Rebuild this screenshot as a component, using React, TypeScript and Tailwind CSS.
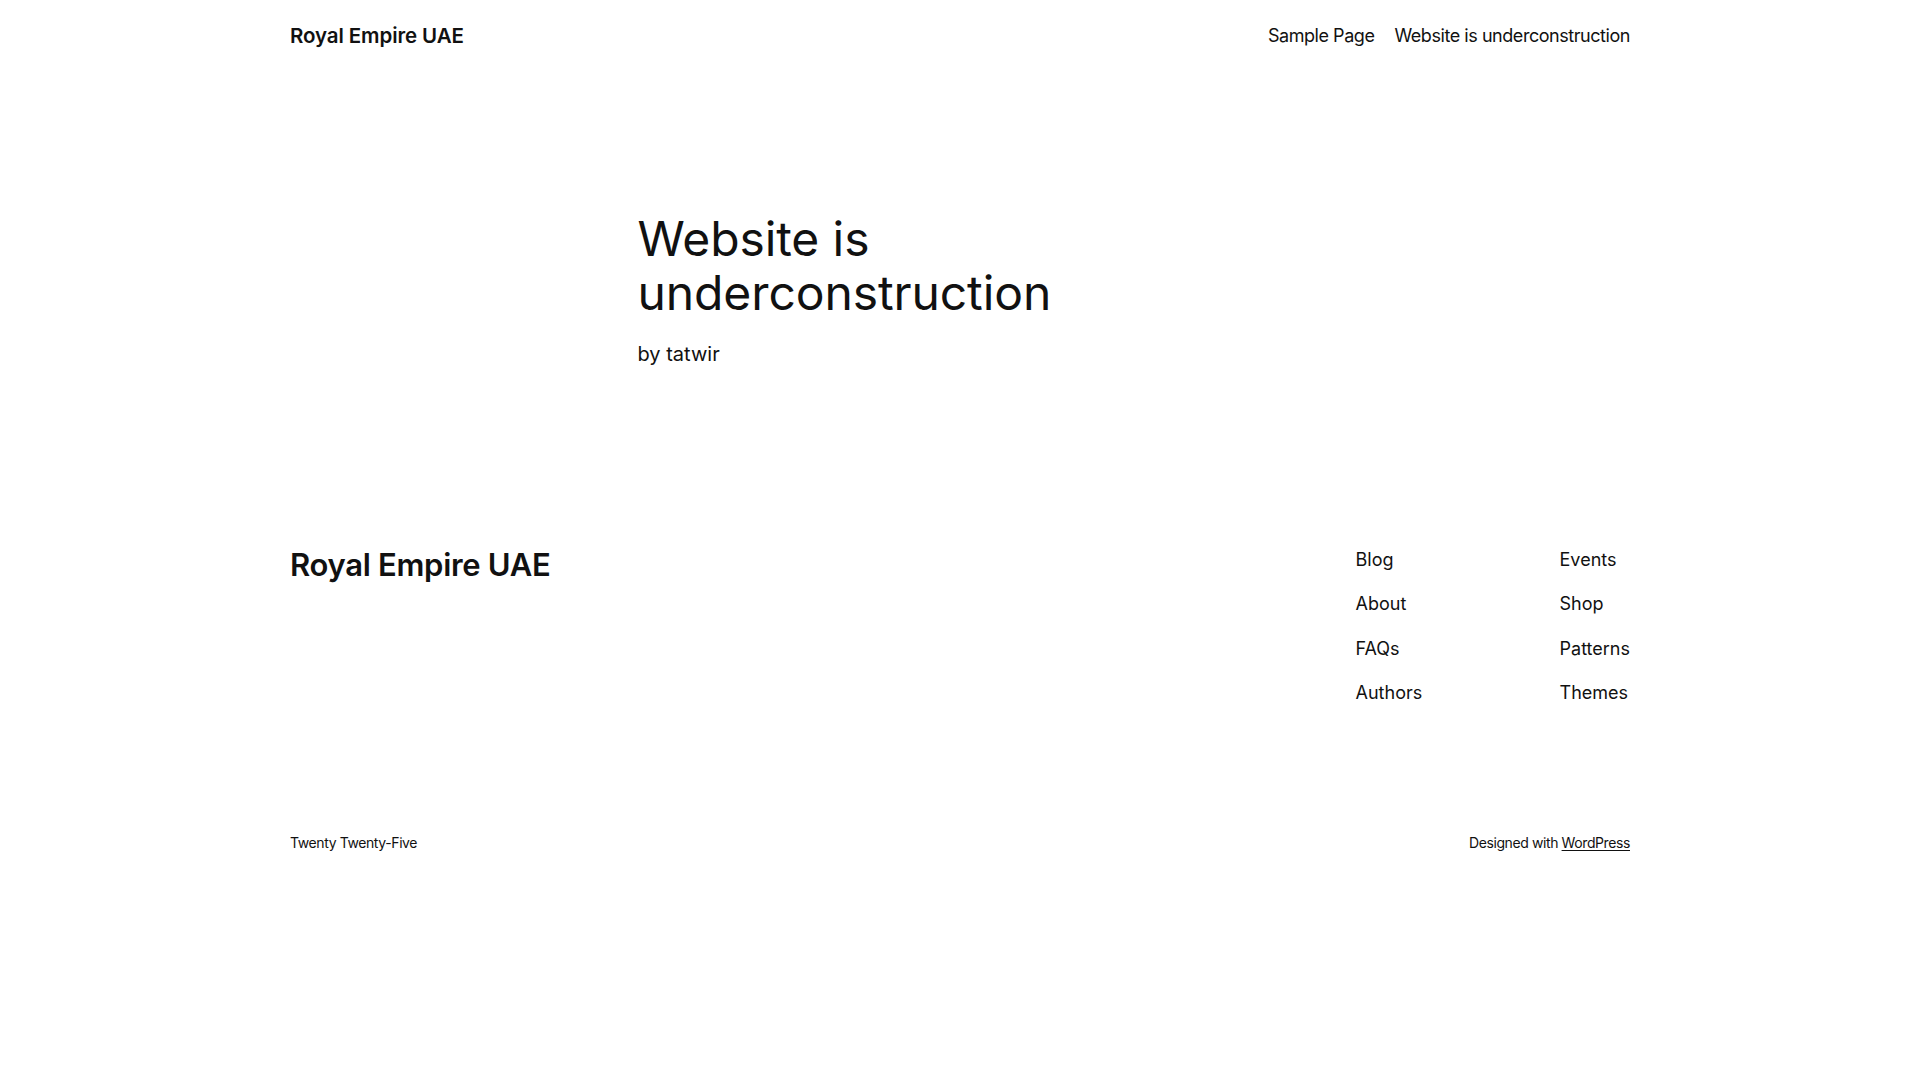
export default function App() {
  const col1 = ["Blog", "About", "FAQs", "Authors"];
  const col2 = ["Events", "Shop", "Patterns", "Themes"];

  return (
    <div className="min-h-screen bg-white text-[#111111] font-['Inter','Noto_Sans',sans-serif]">
      {/* Header */}
      <header className="mx-auto w-[1340px] h-[72px] flex items-center justify-between">
        <a className="text-[20.5px] font-semibold leading-[1.4] tracking-[-0.1px]">Royal Empire UAE</a>
        <nav className="flex items-center gap-5 text-[18px] leading-[1.4] tracking-[-0.45px]">
          <a>Sample Page</a>
          <a>Website is underconstruction</a>
        </nav>
      </header>

      {/* Main */}
      <main className="mx-auto w-[645px] pt-[140px]">
        <h1 className="text-[48px] leading-[54px] font-normal tracking-[-0.1px]">
          Website is underconstruction
        </h1>
        <p className="mt-5 text-[20px] leading-[28px]">by tatwir</p>
      </main>

      {/* Footer */}
      <footer className="mx-auto w-[1340px] pt-[179px] pb-[60px]">
        <div className="flex items-start justify-between">
          <h2 className="text-[31px] leading-[36px] font-semibold tracking-[-0.3px]">Royal Empire UAE</h2>
          <div className="flex gap-[140px] text-[18px] leading-[25.2px]">
            <ul className="flex flex-col gap-[19.2px] w-[64px]">
              {col1.map((l) => (
                <li key={l}>
                  <a>{l}</a>
                </li>
              ))}
            </ul>
            <ul className="flex flex-col gap-[19.2px]">
              {col2.map((l) => (
                <li key={l}>
                  <a>{l}</a>
                </li>
              ))}
            </ul>
          </div>
        </div>
        <div className="mt-[128px] flex items-center justify-between text-[14px] leading-[19.6px] tracking-[-0.4px]">
          <p>Twenty Twenty-Five</p>
          <p>
            Designed with <a className="underline underline-offset-2">WordPress</a>
          </p>
        </div>
      </footer>
    </div>
  );
}
